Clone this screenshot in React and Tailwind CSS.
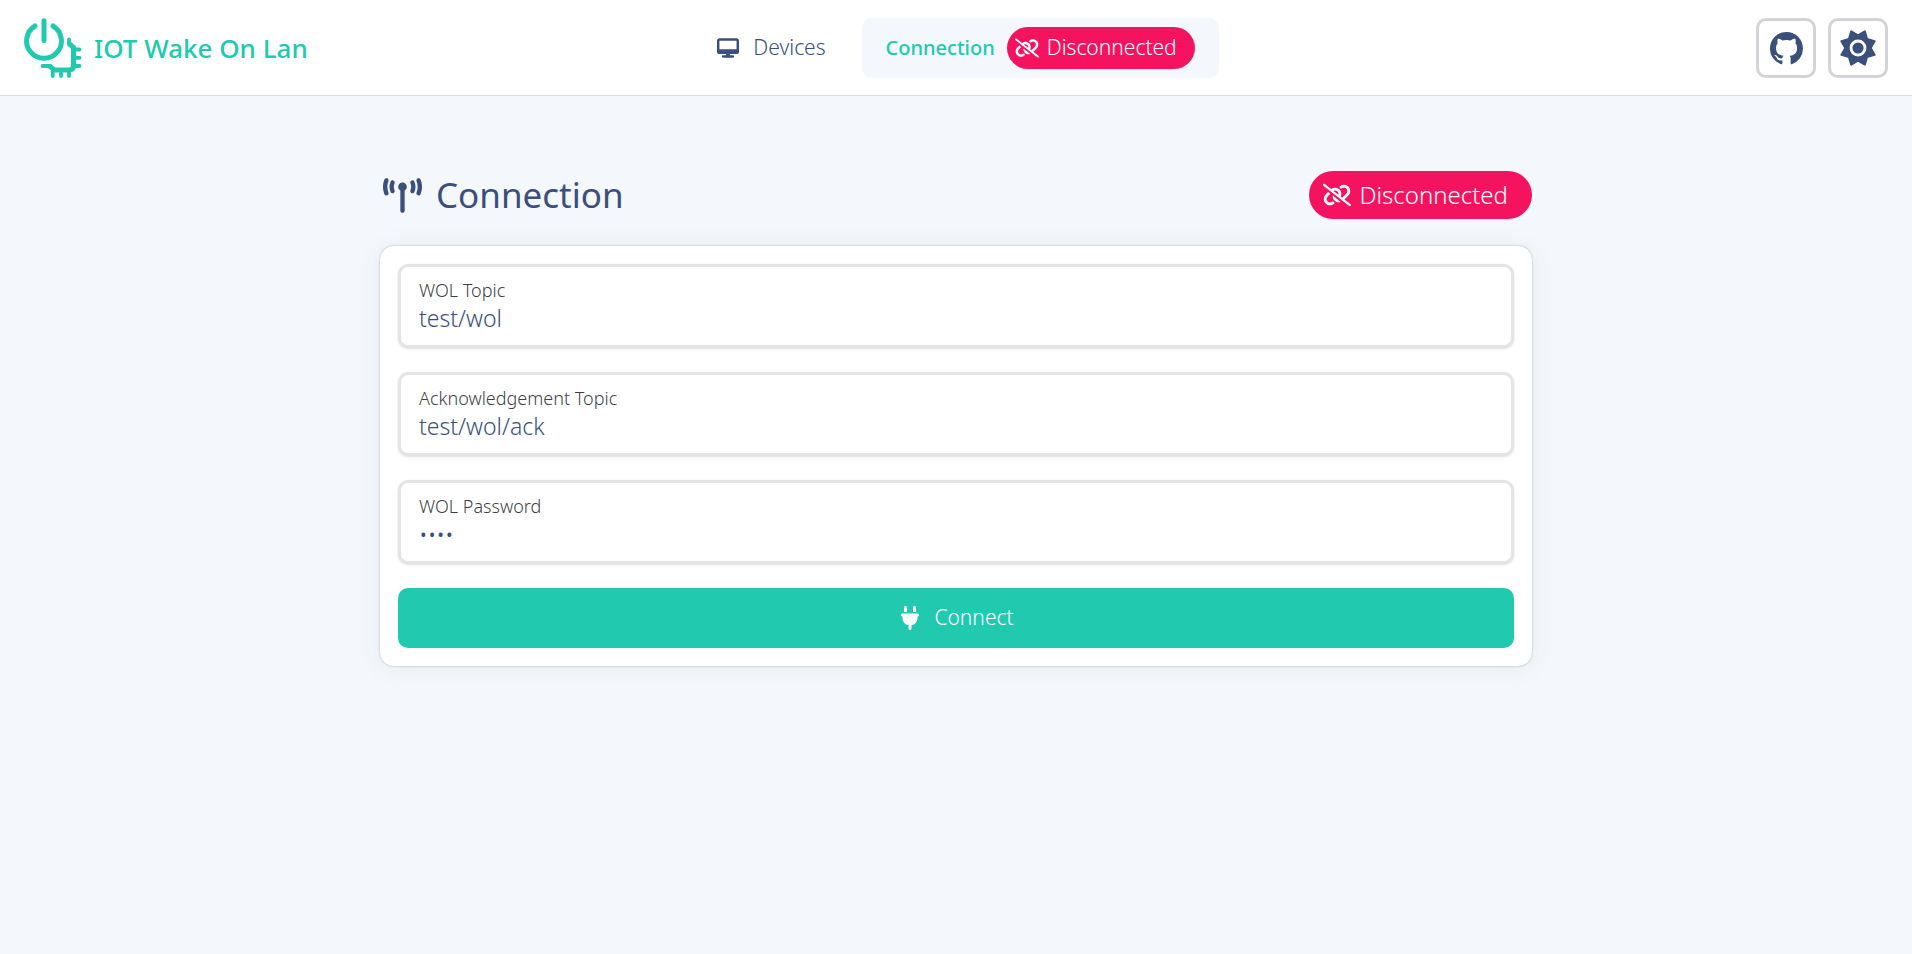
import { FaDesktop, FaLinkSlash, FaPlug, FaTowerBroadcast } from 'react-icons/fa6';
import { BsGithub } from 'react-icons/bs';

function Logo() {
  return (
    <svg width="60" height="60" viewBox="0 0 60 60" fill="none" stroke="currentColor" strokeLinecap="round" strokeLinejoin="round" aria-hidden="true">
      <path d="M20 2.7V22.5M11 8A17.4 17.4 0 1 0 29 8" strokeWidth="5" />
      <path d="M45.5 26L49.5 29.5V47.5Q49.5 52 45 52H30.5L26 48.5" strokeWidth="5" />
      <path d="M45 21.5V26M18.5 48H26M50 31.5H55.5M50 39.8H55.5M50 48H55.5M28.7 53V58M37 53V58M45 53V58" strokeWidth="3.8" />
    </svg>
  );
}

function SunIcon() {
  return (
    <svg width="36" height="36" viewBox="-18 -18 36 36" aria-hidden="true">
      <path
        d="M0-12.6 6.8-16.5 9-9 16.5-6.8 12.6 0 16.5 6.8 9 9 6.8 16.5 0 12.6-6.8 16.5-9 9-16.5 6.8-12.6 0-16.5-6.8-9-9-6.8-16.5Z"
        fill="currentColor"
        stroke="currentColor"
        strokeWidth="2.2"
        strokeLinejoin="round"
      />
      <circle r="7" fill="none" stroke="#fff" strokeWidth="2.8" />
    </svg>
  );
}

function StatusPill({ large = false }) {
  return (
    <span
      className={
        large
          ? 'flex h-12 items-center gap-2 rounded-full bg-[#f5135f] pr-6 pl-[14px] text-[24px] font-light text-white'
          : 'flex h-[42px] items-center gap-2 rounded-full bg-[#f5135f] pr-[18px] pl-2 text-[21px] font-light text-white'
      }
    >
      <FaLinkSlash size={large ? 28 : 24} aria-hidden="true" />
      Disconnected
    </span>
  );
}

function Field({ id, label, type = 'text', value }) {
  return (
    <div className="rounded-[10px] border-3 border-[#e4e4e7] bg-white px-[18px] py-[11px] shadow-sm">
      <label htmlFor={id} className="block text-[18px] leading-6 font-light text-[#3f3f46]">
        {label}
      </label>
      <input
        id={id}
        type={type}
        defaultValue={value}
        className="block h-8 w-full bg-transparent text-[23px] leading-8 font-light outline-none"
      />
    </div>
  );
}

const iconButton =
  'flex size-[60px] items-center justify-center rounded-[10px] border-3 border-[#d4d4d8] bg-white';

export default function App() {
  return (
    <div className="min-h-screen bg-[#f4f7fc] font-['Noto_Sans',sans-serif] text-[#3b4f7d]">
      <header className="grid grid-cols-[1fr_auto_1fr] items-center border-b border-[#d9dbe0] bg-white px-6 pt-[18px] pb-[17px]">
        <a href="#home" className="flex items-center gap-[10px] justify-self-start text-[26px] font-medium text-[#21c9af]">
          <Logo />
          IOT Wake On Lan
        </a>
        <nav className="flex gap-3">
          <a href="#devices" className="flex h-[60px] items-center gap-[14px] rounded-[10px] px-6 text-[21px] font-light">
            <FaDesktop size={22} aria-hidden="true" />
            Devices
          </a>
          <a
            href="#connection"
            aria-current="page"
            className="flex h-[60px] items-center gap-3 rounded-[10px] bg-[#f4f7fc] px-6 text-[20px] font-medium text-[#21c9af]"
          >
            Connection
            <StatusPill />
          </a>
        </nav>
        <div className="flex gap-3 justify-self-end">
          <a href="#github" aria-label="GitHub" className={iconButton}>
            <BsGithub size={33} />
          </a>
          <button type="button" aria-label="Toggle theme" className={iconButton}>
            <SunIcon />
          </button>
        </div>
      </header>

      <main className="mx-auto max-w-6xl pt-[75px]">
        <div className="flex items-center justify-between">
          <h1 className="flex h-12 items-center gap-[14px] pl-[3px] text-[35px] font-normal">
            <FaTowerBroadcast size={39} aria-hidden="true" />
            Connection
          </h1>
          <StatusPill large />
        </div>
        <form
          onSubmit={(e) => e.preventDefault()}
          className="mt-[27px] flex flex-col gap-6 rounded-[14px] bg-white p-[18px] shadow-[0_0_15px_rgba(0,0,0,0.02),0_2px_30px_rgba(0,0,0,0.05),0_0_2px_rgba(0,0,0,0.3)]"
        >
          <Field id="wol-topic" label="WOL Topic" value="test/wol" />
          <Field id="ack-topic" label="Acknowledgement Topic" value="test/wol/ack" />
          <Field id="wol-password" label="WOL Password" type="password" value="test" />
          <button
            type="submit"
            className="flex h-[60px] items-center justify-center gap-3 rounded-[10px] bg-[#21c9af] text-[21px] font-light text-white"
          >
            <FaPlug size={24} aria-hidden="true" />
            Connect
          </button>
        </form>
      </main>
    </div>
  );
}
